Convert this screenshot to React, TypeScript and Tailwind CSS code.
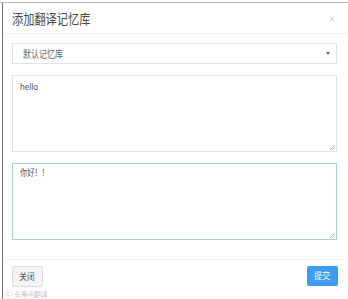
import React from "react";

export default function App() {
  return (
    <div className="w-[348px] h-[299px] bg-white overflow-hidden font-['Lato','Noto_Sans_CJK_SC',sans-serif] relative">
      <div className="h-[2px] bg-white" />
      <div className="h-px bg-[#b8b8b8]" />
      <div className="ml-[2px] border-l border-[#707070] h-[296px] flex flex-col">
        {/* Header */}
        <div className="h-[31px] pl-[9px] pr-[12px] flex items-center justify-between border-b border-[#f2f2f2]">
          <h3 className="inline-block origin-left scale-x-[0.8] text-[14px] leading-none text-[#4a4a4a] mt-[1px]">
            添加翻译记忆库
          </h3>
          <span className="text-[11px] leading-none text-[#cccccc] mr-[1px]">×</span>
        </div>

        {/* Body */}
        <div className="pl-[9px] pr-[11px] pt-[9px] flex flex-col gap-[11px]">
          <div className="h-[21px] border border-[#e3e3e3] flex items-center justify-between pl-[10px] pr-[6px]">
            <span className="inline-block origin-left scale-x-[0.8] text-[10px] leading-none text-[#666]">默认记忆库</span>
            <svg width="4" height="3" viewBox="0 0 4 3">
              <path d="M0 0 L4 0 L2 3 Z" fill="#666" />
            </svg>
          </div>
          <div className="h-[77px] border border-[#e3e3e3] relative px-[7px] pt-[5px]">
            <div className="origin-left scale-x-[0.85] text-[10px] leading-[10px] text-[#555]">hello</div>
            <Grip />
          </div>
          <div className="h-[77px] border border-[#a9d3d3] relative px-[7px] pt-[4px]">
            <div className="origin-left scale-x-[0.8] text-[9px] leading-[10px] text-[#555]">你好！！</div>
            <Grip />
          </div>
        </div>

        {/* Footer */}
        <div className="mt-[19px] border-t border-[#f3f3f3] pl-[9px] pr-[10px] pt-[6px] flex items-start justify-between">
          <button className="h-[21px] w-[31px] bg-[#f4f4f4] border border-[#dcdcdc] rounded-[2px] text-[9px] text-[#555] flex items-center justify-center">
            <span className="inline-block scale-x-[0.85]">关闭</span>
          </button>
          <button className="h-[20px] w-[31px] bg-[#3d9cf0] rounded-[2px] text-[9px] text-white flex items-center justify-center">
            <span className="inline-block scale-x-[0.9]">提交</span>
          </button>
        </div>
      </div>

      {/* watermark */}
      <div className="absolute left-[4px] top-[290px] flex items-center gap-[2px] text-[7px] leading-none text-[#c4c4c4]">
        <span className="text-[8px]">ⓒ</span>
        <span>头条@翻译</span>
      </div>
    </div>
  );
}

function Grip() {
  return (
    <svg className="absolute right-[1px] bottom-[1px]" width="6" height="6" viewBox="0 0 6 6">
      <path d="M1 6 L6 1 M3.5 6 L6 3.5" stroke="#a0a0a0" strokeWidth="0.8" />
    </svg>
  );
}
